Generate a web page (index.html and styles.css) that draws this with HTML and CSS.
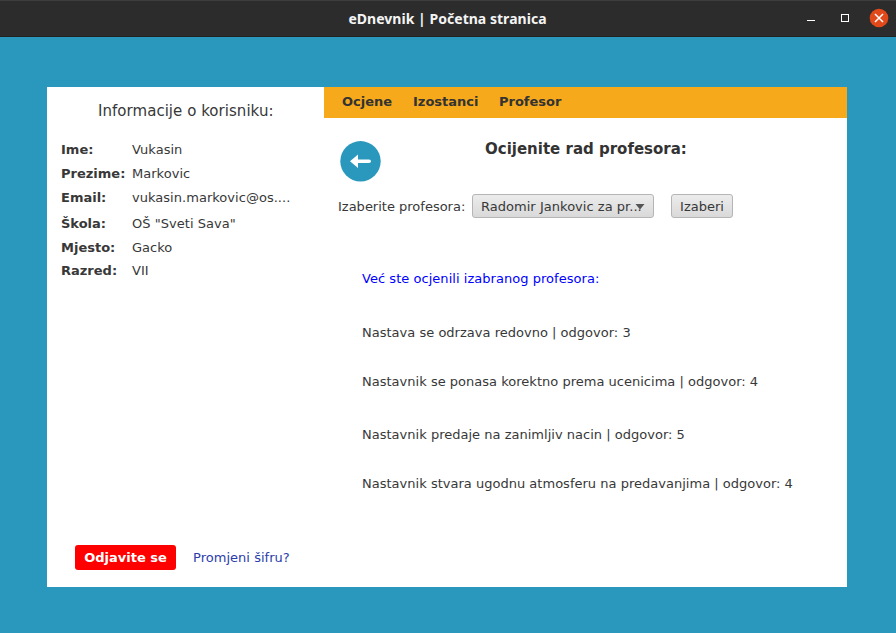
FILE: index.html
```html
<!DOCTYPE html>
<html lang="sr-Latn">
<head>
<meta charset="utf-8">
<title>eDnevnik | Početna stranica</title>
<link rel="stylesheet" href="styles.css">
</head>
<body>
<header class="titlebar">
  <h1 class="window-title">eDnevnik | Početna stranica</h1>
  <svg class="controls" width="96" height="37" viewBox="0 0 96 37">
    <rect x="7" y="20" width="8" height="1" fill="#fff"/>
    <rect x="41.5" y="14.5" width="7" height="7" fill="none" stroke="#fff"/>
    <circle cx="79" cy="18" r="9.3" fill="#e2491a"/>
    <path d="M75 14l8 8M83 14l-8 8" stroke="#fff" stroke-width="1.5"/>
  </svg>
</header>
<main class="panel">
  <aside class="sidebar">
    <h2 class="side-title">Informacije o korisniku:</h2>
    <dl class="info">
      <dt>Ime:</dt><dd>Vukasin</dd>
      <dt>Prezime:</dt><dd>Markovic</dd>
      <dt>Email:</dt><dd>vukasin.markovic@os....</dd>
      <dt class="school">Škola:</dt><dd class="school">OŠ "Sveti Sava"</dd>
      <dt>Mjesto:</dt><dd>Gacko</dd>
      <dt class="grade">Razred:</dt><dd class="grade">VII</dd>
    </dl>
    <div class="account">
      <button class="logout">Odjavite se</button>
      <a class="password">Promjeni šifru?</a>
    </div>
  </aside>
  <section class="content">
    <nav class="menu"><a class="m1">Ocjene</a><a class="m2">Izostanci</a><a>Profesor</a></nav>
    <div class="heading">
      <svg class="back" width="42" height="42" viewBox="0 0 42 42">
        <circle cx="21.5" cy="21.3" r="20.2" fill="#2a97bd"/>
        <path d="M11 21.3L19 14.6V19.6H30Q32 19.6 32 21.3T30 23H19V28Z" fill="#fff"/>
      </svg>
      <h2 class="rate-title">Ocijenite rad profesora:</h2>
    </div>
    <div class="chooser">
      <span class="label">Izaberite profesora:</span>
      <div class="control select"><span>Radomir Jankovic za pr...</span>
        <svg class="arrow" width="10" height="6" viewBox="0 0 10 6"><path d="M0.5 0H9.5L5 5.5Z" fill="#555"/></svg>
      </div>
      <button class="control choose">Izaberi</button>
    </div>
    <div class="answers">
      <p class="notice">Već ste ocjenili izabranog profesora:</p>
      <p class="a1">Nastava se odrzava redovno | odgovor: 3</p>
      <p class="a2">Nastavnik se ponasa korektno prema ucenicima | odgovor: 4</p>
      <p class="a3">Nastavnik predaje na zanimljiv nacin | odgovor: 5</p>
      <p class="a4">Nastavnik stvara ugodnu atmosferu na predavanjima | odgovor: 4</p>
    </div>
  </section>
</main>
</body>
</html>
```
FILE: styles.css
```css
* { box-sizing: border-box; }
body { margin: 0; width: 896px; height: 633px; overflow: hidden; background: #2a97bd; color: #383838; font: 13px/24px "DejaVu Sans", sans-serif; white-space: nowrap; }
h1, h2, p, dl, dd { margin: 0; }
button { font: inherit; padding: 0; }
.titlebar { height: 37px; background: #2c2c2c; border-top: 1px solid #3d3d3d; border-bottom: 1px solid #222; display: grid; grid-template-columns: 100px 1fr 96px; }
.window-title { grid-column: 2; padding-right: 5px; text-align: center; color: #f4f4f4; font: bold 14px/35px "Noto Sans", sans-serif; letter-spacing: .03px; }
.controls { margin-top: -1px; }
.panel { margin: 50px 0 0 47px; width: 800px; height: 500px; background: #fff; display: flex; }
.sidebar { width: 277px; display: flex; flex-direction: column; }
.side-title { margin: 12px 0 0 51px; font-weight: normal; font-size: 15px; line-height: 24px; letter-spacing: .04px; }
.info { display: grid; grid-template-columns: 71px 1fr; margin: 15px 0 0 14px; letter-spacing: .03px; }
.info dt { font-weight: bold; letter-spacing: 0; }
.info .school { margin-top: 2px; }
.info .grade { margin-top: -1px; }
.account { margin: auto 0 17px 28px; display: flex; gap: 17px; }
.logout { width: 101px; height: 25px; border: 0; border-radius: 3px; background: #f00; color: #fff; font-weight: bold; }
.password { color: #2b3cab; line-height: 25px; letter-spacing: .03px; }
.content { flex: 1; }
.menu { height: 31px; padding-left: 18px; display: flex; background: #f6a91b; font-weight: bold; color: #333; line-height: 29px; }
.m1 { width: 71px; }
.m2 { width: 86px; }
.heading { display: flex; padding: 22px 0 0 15px; }
.rate-title { margin: -3px 0 0 104px; color: #333; font-size: 15px; line-height: 24px; }
.chooser { display: flex; margin: 12px 0 0 14px; }
.label { width: 134px; line-height: 26px; height: 24px; }
.control { height: 24px; border: 1px solid #b5b5b5; border-radius: 3px; background: linear-gradient(#ececec, #d9d9d9); color: #383838; line-height: 24px; }
.select { width: 182px; padding-left: 8px; position: relative; letter-spacing: .03px; }
.arrow { position: absolute; right: 8px; top: 9px; }
.choose { width: 62px; margin-left: 17px; padding-top: 1px; line-height: 22px; }
.answers { padding: 49px 0 0 38px; letter-spacing: .015px; }
.notice { color: #00f; letter-spacing: .04px; }
.a1 { margin-top: 30px; }
.a2 { margin-top: 25px; }
.a3 { margin-top: 29px; }
.a4 { margin-top: 25px; }
```
